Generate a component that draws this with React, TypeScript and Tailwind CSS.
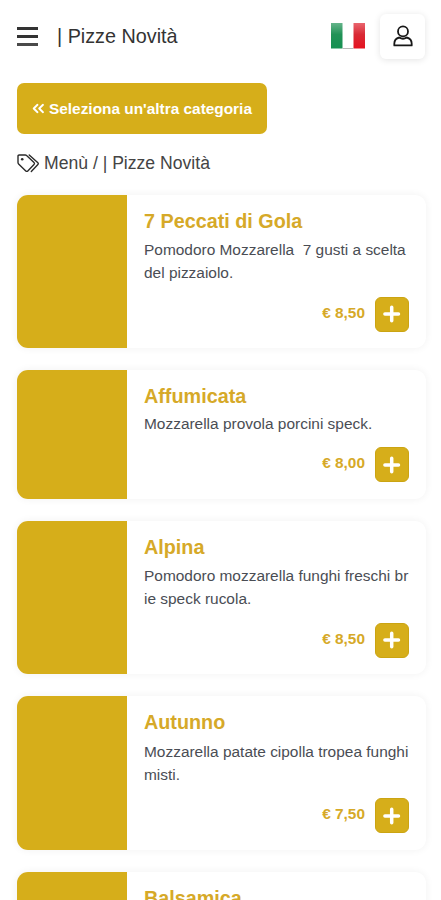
import React from "react";
import { clsx } from "clsx";

type Pizza = {
  name: string;
  lines: string[];
  price?: string;
};

const pizzas: Pizza[] = [
  {
    name: "7 Peccati di Gola",
    lines: ["Pomodoro Mozzarella  7 gusti a scelta", "del pizzaiolo."],
    price: "€ 8,50",
  },
  {
    name: "Affumicata",
    lines: ["Mozzarella provola porcini speck."],
    price: "€ 8,00",
  },
  {
    name: "Alpina",
    lines: ["Pomodoro mozzarella funghi freschi br", "ie speck rucola."],
    price: "€ 8,50",
  },
  {
    name: "Autunno",
    lines: ["Mozzarella patate cipolla tropea funghi", "misti."],
    price: "€ 7,50",
  },
  {
    name: "Balsamica",
    lines: [],
  },
];

const UserIcon = () => (
  <svg
    viewBox="0 0 20 22"
    className="mb-[2px] h-[22px] w-5"
    fill="none"
    stroke="#171717"
    strokeWidth="1.8"
    strokeLinejoin="round"
  >
    <circle cx="10" cy="6.400" r="5" />
    <path d="M6.300 12.500C3.200 13.200 1.300 15.500 1.300 18.800V20.400H18.700V18.800C18.700 15.500 16.800 13.200 13.700 12.500C11.500 14 8.500 14 6.300 12.500Z" />
  </svg>
);

const TagsIcon = () => (
  <svg
    viewBox="0 0 23 19"
    className="h-[19px] w-[23px] shrink-0"
    fill="none"
    stroke="#2b2b2b"
    strokeWidth="1.4"
    strokeLinejoin="round"
    strokeLinecap="round"
  >
    <path d="M2.200 1H8.200Q9 1 9.600 1.600L17 8.600Q18 9.600 17 10.600L10.800 16.900Q9.800 17.900 8.800 16.900L1.600 9.900Q1 9.300 1 8.500V2.200Q1 1 2.200 1Z" />
    <path d="M12.200 1L20.900 8.800Q21.800 9.700 20.900 10.600L14.300 17.400" />
    <circle cx="5.200" cy="5.200" r="1.300" fill="#2b2b2b" stroke="none" />
  </svg>
);

const ItalianFlag = () => (
  <svg viewBox="0 0 34 26" className="h-[26px] w-[34px]">
    <defs>
      <linearGradient id="green" x1="0" y1="0" x2="0" y2="1">
        <stop offset="0" stopColor="#65b48a" />
        <stop offset="0.45" stopColor="#219256" />
        <stop offset="1" stopColor="#159052" />
      </linearGradient>
      <linearGradient id="red" x1="0" y1="0" x2="0" y2="1">
        <stop offset="0" stopColor="#e9656e" />
        <stop offset="0.45" stopColor="#d92a35" />
        <stop offset="1" stopColor="#e5121f" />
      </linearGradient>
    </defs>
    <rect width="34" height="26" fill="#ffffff" />
    <rect width="11.500" height="25.500" fill="url(#green)" />
    <rect x="22.500" width="11.500" height="25.500" fill="url(#red)" />
    <rect x="11.500" y="25" width="11" height="1" fill="#b9b9b9" />
  </svg>
);

const Header = () => (
  <header className="flex h-[73px] items-center pr-4 pl-[17px]">
    <button className="flex flex-col gap-[5px]" aria-label="Menu">
      <span className="h-[3px] w-[21px] bg-[#333333]" />
      <span className="h-[3px] w-[21px] bg-[#333333]" />
      <span className="h-[3px] w-[21px] bg-[#4a4a4a]" />
    </button>
    <h1 className="ml-[19px] pt-px text-[19.800px] text-[#333333]">
      | Pizze Novità
    </h1>
    <div className="ml-auto flex items-center gap-[15px]">
      <div className="pb-px">
        <ItalianFlag />
      </div>
      <button
        className="flex size-[45px] items-center justify-center rounded-[6px] bg-white shadow-[0_1px_7px_rgba(0,0,0,0.11)]"
        aria-label="Account"
      >
        <UserIcon />
      </button>
    </div>
  </header>
);

const PizzaCard = ({ pizza }: { pizza: Pizza }) => {
  const short = pizza.lines.length === 1;

  return (
    <li
      className={clsx(
        "flex overflow-hidden rounded-[11px] bg-white shadow-[0_0_8px_rgba(0,0,0,0.06)]",
        short ? "h-[128.500px]" : "h-[153.500px]"
      )}
    >
      <div className="w-[110px] shrink-0 bg-[#d6ae1a]" />

      <div className="flex flex-1 flex-col pt-[14px] pr-[17px] pb-[16.500px] pl-[17px]">
        <h2 className="text-[19.800px] leading-6 font-bold text-[#d6a928]">
          {pizza.name}
        </h2>

        <p
          className={clsx(
            "text-[15.450px] leading-[23px] whitespace-pre text-[#4a4d54]",
            short ? "mt-1" : "mt-[5.500px]"
          )}
        >
          {pizza.lines.join("\n")}
        </p>

        {pizza.price && (
          <div className="mt-auto flex items-center justify-end gap-[10px]">
            <span className="pb-[3px] text-[15.400px] leading-[22px] font-bold text-[#d6a928]">
              {pizza.price}
            </span>
            <button
              className="flex h-[35px] w-[34px] items-center justify-center rounded-[6px] border border-[#cba412] bg-[#d6ae1a]"
              aria-label="Aggiungi"
            >
              <svg
                viewBox="0 0 18 18"
                className="size-[18px]"
                stroke="#ffffff"
                strokeWidth="3.500"
                strokeLinecap="round"
              >
                <path d="M8.700 2.200V15.800M1.900 9H15.500" />
              </svg>
            </button>
          </div>
        )}
      </div>
    </li>
  );
};

export default function App() {
  return (
    <div className="h-[900px] w-[441px] overflow-hidden bg-white font-['Liberation_Sans',Arial,sans-serif]">
      <Header />

      <main className="px-[17px] pt-[10px]">
        <button className="flex h-[51px] w-[250px] items-center rounded-[7px] bg-[#d6ae1a] pl-[15px] text-[15.400px] font-bold whitespace-nowrap text-white">
          <svg
            viewBox="0 0 13 11"
            className="mr-1 h-[11px] w-[13px] shrink-0"
            fill="none"
            stroke="#ffffff"
            strokeWidth="1.900"
            strokeLinecap="round"
            strokeLinejoin="round"
          >
            <path d="M5.500 1.800L1.700 5.500L5.500 9.200M11 1.800L7.200 5.500L11 9.200" />
          </svg>
          Seleziona un'altra categoria
        </button>

        <nav className="mt-[17px] flex h-6 items-center text-[17.600px] text-[#444444]">
          <TagsIcon />
          <span className="ml-1">Menù / | Pizze Novità</span>
        </nav>

        <ul className="mt-[19.500px] mr-[-2px] flex flex-col gap-[22px]">
          {pizzas.map((pizza) => (
            <PizzaCard key={pizza.name} pizza={pizza} />
          ))}
        </ul>
      </main>
    </div>
  );
}
